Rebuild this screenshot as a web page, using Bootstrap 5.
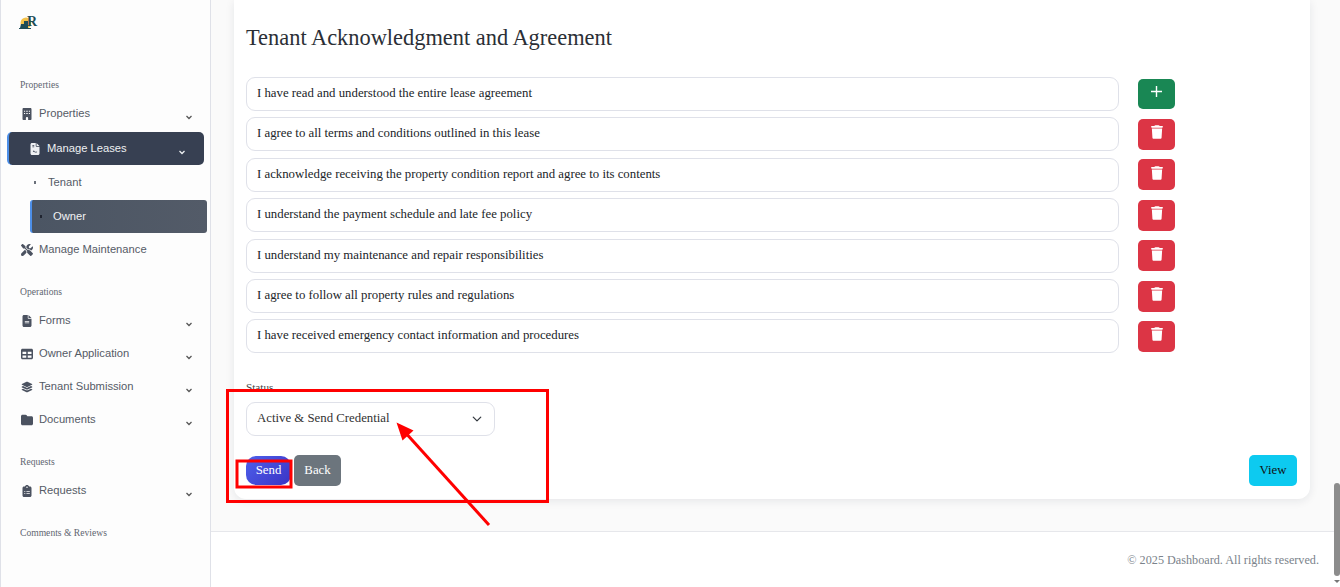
<!doctype html>
<html lang="en">
<head>
<meta charset="utf-8">
<title>Tenant Acknowledgment and Agreement</title>
<link href="https://cdn.jsdelivr.net/npm/bootstrap@5.3.0/dist/css/bootstrap.min.css" rel="stylesheet">
<style>
html,body{height:587px;overflow:hidden}
body{font-family:"Liberation Serif",serif;background:#fff;color:#212529}
.page-shell{height:587px;position:relative}
.side-rail{width:211px;flex:none;height:587px;background:#fdfdfd;border-left:1px solid #dfe1e8;border-right:1px solid #dfe1e8;font-family:"Liberation Sans",sans-serif}
.logo-box{height:78px;padding:15px 0 0 18px}
.logo-r{font:700 14px/1 "Liberation Serif",serif;color:#1d4d57;margin-left:-4px}
.sec-label{font:9.6px/14px "Liberation Serif",serif;color:#5f6671;padding-left:19px;height:14px}
.sec-gap{margin-top:19px}
.first-list{margin-top:5px}
.menu-line{height:33px;font-size:11.2px;color:#555b66;padding-left:20px;position:relative}
.menu-line svg.ico{width:12px;height:12px;fill:#4b5260;margin-right:6px;flex:none}
.menu-line .chev{position:absolute;left:184px;top:16px;width:8px;height:8px}
.menu-open{width:197px;margin:2px 0 1px 6px;padding-left:20px;background:#374052;border-left:2px solid #4d8fe8;border-radius:5px;color:#eef0f3}
.menu-open svg.ico{fill:#eef0f3;margin-right:6px}
.menu-open .chev{left:169px}
.sub-line{padding-left:33px}
.sub-dot{width:2px;height:3px;background:#6a707a;margin-right:12px;flex:none}
.sub-on{width:177px;margin:1px 0 0 29px;padding-left:8px;background:linear-gradient(90deg,#4b5563,#535b68);border-left:2px solid #4d8fe8;border-radius:3px;color:#f1f2f4}
.sub-on .sub-dot{background:#1f2430;margin-right:11px}
.main-pane{background:#fafafa;height:587px;min-width:0}
.form-sheet{margin:0 30px 0 23px;height:499px;background:#fff;border-radius:0 0 12px 12px;box-shadow:0 2px 10px rgba(20,30,60,.09);padding:0 13px 0 12px}
.sheet-title{font:22.4px/28px "Liberation Serif",serif;padding-top:24px;margin:0 0 25px;color:#2b2f36}
.ack-row{height:34px;margin-bottom:6.4px}
.ack-input{width:873px;height:34px;flex:none;border:1px solid #dfe1e9;border-radius:9px;font:12.8px/1 "Liberation Serif",serif;padding:0 10px 1px;color:#212529;box-shadow:none}
.sq-btn{width:37px;height:31px;margin-left:19px;padding:0;border:0;border-radius:5px;display:flex;align-items:center;justify-content:center;margin-top:1.6px}
.sq-btn svg{fill:#fff;width:12px;height:14px;margin-top:-4px}
.sq-btn.is-add{height:30px}
.sq-btn.is-add svg{width:11px;height:11px}
.status-cap{font-size:11.2px;line-height:12px;margin:28px 0 9px;color:#444}
.status-pick{width:249px;height:34px;border:1px solid #dfe1e9;border-radius:9px;font:12.8px/1 "Liberation Serif",serif;padding:0 10px 2px;color:#333;background-size:12px 10px;background-position:right 11px center}
.act-line{margin-top:19px}
.act-btn{font:12.8px/1 "Liberation Serif",serif;height:31px;padding:0 11px;border:0;border-radius:5px}
.btn-send{background:linear-gradient(135deg,#4d60ec,#3a33c4);color:#fff;width:45px;height:29px;margin-top:1px;padding:0;border-radius:10px;margin-right:3px}
.btn-backish{background:#6c757d;color:#fff;width:47px;padding-left:0;padding-right:0}
.btn-viewish{background:#0dcaf0;color:#111;width:48px;padding-left:0;padding-right:0}
.foot-line{margin-top:32px;height:56px;background:#fff;border-top:1px solid #e6e7eb;padding:20px 21px 0 0;font-size:12.2px;line-height:16px;color:#7b838b}
.mark-layer{position:absolute;left:0;top:0;width:1340px;height:587px;pointer-events:none}
.fake-thumb{position:absolute;left:1334px;top:483px;width:6px;height:93px;background:#8c8c8c;border-radius:3px}
.fake-arrow{position:absolute;left:1334px;top:580px;border:3px solid transparent;border-top:3px solid #777;border-bottom:0}
</style>
</head>
<body>
<div class="page-shell d-flex">
  <aside class="side-rail">
    <div class="logo-box d-flex align-items-start">
      <svg width="12" height="15" viewBox="0 0 12 15"><circle cx="7" cy="8" r="5.500" fill="#f4c34a"/><path d="M1 13l1-4h3V6h4v7zM0 13h12v1H0z" fill="#1d4d57"/></svg>
      <span class="logo-r">R</span>
    </div>
    <div class="sec-label">Properties</div>
    <div class="first-list">
      <div class="menu-line d-flex align-items-center"><svg class="ico" viewBox="0 0 384 512"><path d="M48 0C21.500 0 0 21.500 0 48V464c0 26.500 21.500 48 48 48h96V432c0-26.500 21.500-48 48-48s48 21.500 48 48v80h96c26.500 0 48-21.500 48-48V48c0-26.500-21.500-48-48-48H48zM64 240V208h48v48H64zm96-32h64v48h-64zm112 0h48v48h-48zM64 112h48v48H64zm96 0h64v48h-64zm112 0h48v48h-48z"/></svg>Properties<svg class="chev" viewBox="0 0 16 16"><path d="M3 6l5 5 5-5" fill="none" stroke="#555" stroke-width="2.500"/></svg></div>
      <div class="menu-line menu-open d-flex align-items-center"><svg class="ico" viewBox="0 0 384 512"><path d="M64 0C28.700 0 0 28.700 0 64V448c0 35.300 28.700 64 64 64H320c35.300 0 64-28.700 64-64V160H256c-17.700 0-32-14.300-32-32V0H64zM256 0V128H384L256 0zM80 80h80v32H80zm0 64h80v32H80zm20 216c30-50 50-50 70-10 20 30 40 30 110 10v30c-70 20-100 20-130-15-10-10-15 0-25 10z"/></svg>Manage Leases<svg class="chev" viewBox="0 0 16 16"><path d="M3 6l5 5 5-5" fill="none" stroke="#eef0f3" stroke-width="2.500"/></svg></div>
      <div class="menu-line sub-line d-flex align-items-center"><span class="sub-dot"></span>Tenant</div>
      <div class="menu-line sub-on d-flex align-items-center"><span class="sub-dot"></span>Owner</div>
      <div class="menu-line d-flex align-items-center"><svg class="ico" viewBox="0 0 512 512"><path d="M78.600 5C69.100-2.400 55.600-1.500 47 7L7 47c-8.500 8.500-9.400 22-2.100 31.600l80 104c4.500 5.900 11.600 9.400 19 9.400h54.100l109 109c-14.700 29-10 65.400 14.300 89.600l112 112c12.500 12.500 32.800 12.500 45.300 0l64-64c12.500-12.500 12.500-32.800 0-45.300l-112-112c-24.200-24.200-60.600-29-89.600-14.300l-109-109V104c0-7.500-3.500-14.500-9.400-19L78.600 5zM19.900 396.100C7.200 408.800 0 426.100 0 444.100C0 481.600 30.400 512 67.900 512c18 0 35.300-7.200 48-19.900L233.700 374.300c-7.800-20.900-9-43.600-3.600-65.100l-61.700-61.700L19.900 396.100zM512 144c0-10.500-1.100-20.700-3.200-30.500c-2.400-11.200-16.100-14.100-24.200-6l-63.900 63.900c-3 3-7.100 4.700-11.300 4.700H352c-8.800 0-16-7.200-16-16V102.600c0-4.200 1.700-8.300 4.700-11.300l63.900-63.900c8.100-8.100 5.200-21.800-6-24.200C388.700 1.100 378.500 0 368 0C288.500 0 224 64.500 224 144l0 .8 85.300 85.300c36-9.100 75.800 .5 104 28.700L429 274.500c49-23 83-72.800 83-130.500z"/></svg>Manage Maintenance</div>
    </div>
    <div class="sec-label sec-gap">Operations</div>
    <div class="first-list">
      <div class="menu-line d-flex align-items-center"><svg class="ico" viewBox="0 0 384 512"><path d="M64 0C28.700 0 0 28.700 0 64V448c0 35.300 28.700 64 64 64H320c35.300 0 64-28.700 64-64V160H256c-17.700 0-32-14.300-32-32V0H64zM256 0V128H384L256 0zM112 256H272c8.800 0 16 7.200 16 16s-7.200 16-16 16H112c-8.800 0-16-7.200-16-16s7.200-16 16-16zm0 64H272c8.800 0 16 7.200 16 16s-7.200 16-16 16H112c-8.800 0-16-7.200-16-16s7.200-16 16-16z"/></svg>Forms<svg class="chev" viewBox="0 0 16 16"><path d="M3 6l5 5 5-5" fill="none" stroke="#555" stroke-width="2.500"/></svg></div>
      <div class="menu-line d-flex align-items-center"><svg class="ico" viewBox="0 0 512 512"><path d="M64 32C28.700 32 0 60.700 0 96V416c0 35.300 28.700 64 64 64H448c35.300 0 64-28.700 64-64V96c0-35.300-28.700-64-64-64H64zM64 160H224v96H64zm0 160H224v96H64zM288 160H448v96H288zm0 160H448v96H288z"/></svg>Owner Application<svg class="chev" viewBox="0 0 16 16"><path d="M3 6l5 5 5-5" fill="none" stroke="#555" stroke-width="2.500"/></svg></div>
      <div class="menu-line d-flex align-items-center"><svg class="ico" viewBox="0 0 576 512"><path d="M264.500 5.200c14.900-6.900 32.100-6.900 47 0l218.600 101c8.500 3.900 13.900 12.400 13.900 21.800s-5.400 17.900-13.900 21.800l-218.600 101c-14.900 6.900-32.100 6.900-47 0L45.900 149.800C37.400 145.800 32 137.300 32 128s5.400-17.900 13.900-21.800L264.500 5.200zM476.900 209.600l53.200 24.600c8.500 3.900 13.900 12.400 13.900 21.800s-5.400 17.900-13.900 21.800l-218.600 101c-14.900 6.900-32.100 6.900-47 0L45.900 277.800C37.400 273.800 32 265.300 32 256s5.400-17.900 13.900-21.800l53.200-24.600 152 70.200c23.400 10.800 50.400 10.800 73.800 0l152-70.200zm-152 198.200l152-70.200 53.200 24.600c8.500 3.900 13.900 12.400 13.900 21.800s-5.400 17.900-13.900 21.800l-218.600 101c-14.900 6.900-32.100 6.900-47 0L45.900 405.800C37.400 401.800 32 393.300 32 384s5.400-17.900 13.900-21.800l53.200-24.600 152 70.200c23.400 10.800 50.400 10.800 73.800 0z"/></svg>Tenant Submission<svg class="chev" viewBox="0 0 16 16"><path d="M3 6l5 5 5-5" fill="none" stroke="#555" stroke-width="2.500"/></svg></div>
      <div class="menu-line d-flex align-items-center"><svg class="ico" viewBox="0 0 512 512"><path d="M64 480H448c35.300 0 64-28.700 64-64V160c0-35.300-28.700-64-64-64H288c-10.100 0-19.600-4.700-25.600-12.800L243.200 57.600C231.100 41.500 212.100 32 192 32H64C28.700 32 0 60.700 0 96V416c0 35.300 28.700 64 64 64z"/></svg>Documents<svg class="chev" viewBox="0 0 16 16"><path d="M3 6l5 5 5-5" fill="none" stroke="#555" stroke-width="2.500"/></svg></div>
    </div>
    <div class="sec-label sec-gap">Requests</div>
    <div class="first-list">
      <div class="menu-line d-flex align-items-center"><svg class="ico" viewBox="0 0 384 512"><path d="M192 0c-41.800 0-77.400 26.700-90.500 64H64C28.700 64 0 92.700 0 128V448c0 35.300 28.700 64 64 64H320c35.300 0 64-28.700 64-64V128c0-35.300-28.700-64-64-64H282.500C269.400 26.700 233.800 0 192 0zm0 64a32 32 0 1 1 0 64 32 32 0 1 1 0-64zM72 256h48v32H72zm96 0h144v32H168zM72 336h48v32H72zm96 0h144v32H168z"/></svg>Requests<svg class="chev" viewBox="0 0 16 16"><path d="M3 6l5 5 5-5" fill="none" stroke="#555" stroke-width="2.500"/></svg></div>
    </div>
    <div class="sec-label sec-gap">Comments &amp; Reviews</div>
  </aside>
  <main class="main-pane flex-grow-1">
    <section class="form-sheet">
      <h4 class="sheet-title">Tenant Acknowledgment and Agreement</h4>
      <div class="ack-row d-flex"><input class="form-control ack-input" value="I have read and understood the entire lease agreement"><button class="btn btn-success sq-btn is-add" type="button" aria-label="Add"><svg viewBox="0 0 11 11"><path d="M4.800 0h1.400v4.800H11v1.400H6.200V11H4.800V6.200H0V4.800h4.800z"/></svg></button></div>
      <div class="ack-row d-flex"><input class="form-control ack-input" value="I agree to all terms and conditions outlined in this lease"><button class="btn btn-danger sq-btn" type="button" aria-label="Delete"><svg viewBox="0 0 448 512"><path d="M135.200 17.700L128 32H32C14.300 32 0 46.300 0 64S14.300 96 32 96H416c17.700 0 32-14.300 32-32s-14.300-32-32-32H320l-7.200-14.300C307.400 6.800 296.300 0 284.200 0H163.800c-12.100 0-23.200 6.800-28.600 17.700zM416 128H32L53.200 467c1.600 25.300 22.600 45 47.900 45H346.900c25.300 0 46.300-19.700 47.900-45L416 128z"/></svg></button></div>
      <div class="ack-row d-flex"><input class="form-control ack-input" value="I acknowledge receiving the property condition report and agree to its contents"><button class="btn btn-danger sq-btn" type="button" aria-label="Delete"><svg viewBox="0 0 448 512"><path d="M135.200 17.700L128 32H32C14.300 32 0 46.300 0 64S14.300 96 32 96H416c17.700 0 32-14.300 32-32s-14.300-32-32-32H320l-7.200-14.300C307.400 6.800 296.300 0 284.200 0H163.800c-12.100 0-23.200 6.800-28.600 17.700zM416 128H32L53.200 467c1.600 25.300 22.600 45 47.900 45H346.900c25.300 0 46.300-19.700 47.900-45L416 128z"/></svg></button></div>
      <div class="ack-row d-flex"><input class="form-control ack-input" value="I understand the payment schedule and late fee policy"><button class="btn btn-danger sq-btn" type="button" aria-label="Delete"><svg viewBox="0 0 448 512"><path d="M135.200 17.700L128 32H32C14.300 32 0 46.300 0 64S14.300 96 32 96H416c17.700 0 32-14.300 32-32s-14.300-32-32-32H320l-7.200-14.300C307.400 6.800 296.300 0 284.200 0H163.800c-12.100 0-23.200 6.800-28.600 17.700zM416 128H32L53.200 467c1.600 25.300 22.600 45 47.900 45H346.900c25.300 0 46.300-19.700 47.900-45L416 128z"/></svg></button></div>
      <div class="ack-row d-flex"><input class="form-control ack-input" value="I understand my maintenance and repair responsibilities"><button class="btn btn-danger sq-btn" type="button" aria-label="Delete"><svg viewBox="0 0 448 512"><path d="M135.200 17.700L128 32H32C14.300 32 0 46.300 0 64S14.300 96 32 96H416c17.700 0 32-14.300 32-32s-14.300-32-32-32H320l-7.200-14.300C307.400 6.800 296.300 0 284.200 0H163.800c-12.100 0-23.200 6.800-28.600 17.700zM416 128H32L53.200 467c1.600 25.300 22.600 45 47.900 45H346.900c25.300 0 46.300-19.700 47.900-45L416 128z"/></svg></button></div>
      <div class="ack-row d-flex"><input class="form-control ack-input" value="I agree to follow all property rules and regulations"><button class="btn btn-danger sq-btn" type="button" aria-label="Delete"><svg viewBox="0 0 448 512"><path d="M135.200 17.700L128 32H32C14.300 32 0 46.300 0 64S14.300 96 32 96H416c17.700 0 32-14.300 32-32s-14.300-32-32-32H320l-7.200-14.300C307.400 6.800 296.300 0 284.200 0H163.800c-12.100 0-23.200 6.800-28.600 17.700zM416 128H32L53.200 467c1.600 25.300 22.600 45 47.900 45H346.900c25.300 0 46.300-19.700 47.900-45L416 128z"/></svg></button></div>
      <div class="ack-row d-flex"><input class="form-control ack-input" value="I have received emergency contact information and procedures"><button class="btn btn-danger sq-btn" type="button" aria-label="Delete"><svg viewBox="0 0 448 512"><path d="M135.200 17.700L128 32H32C14.300 32 0 46.300 0 64S14.300 96 32 96H416c17.700 0 32-14.300 32-32s-14.300-32-32-32H320l-7.200-14.300C307.400 6.800 296.300 0 284.200 0H163.800c-12.100 0-23.200 6.800-28.600 17.700zM416 128H32L53.200 467c1.600 25.300 22.600 45 47.900 45H346.900c25.300 0 46.300-19.700 47.900-45L416 128z"/></svg></button></div>
      <div class="status-cap">Status</div>
      <select class="form-select status-pick"><option>Active &amp; Send Credential</option></select>
      <div class="act-line d-flex align-items-start">
        <button class="btn act-btn btn-send" type="button">Send</button>
        <button class="btn act-btn btn-backish" type="button">Back</button>
        <button class="btn act-btn btn-viewish ms-auto" type="button">View</button>
      </div>
    </section>
    <footer class="foot-line text-end">© 2025 Dashboard. All rights reserved.</footer>
  </main>
  <svg class="mark-layer" viewBox="0 0 1340 587" aria-hidden="true">
    <rect x="227.500" y="390.500" width="320" height="111" fill="none" stroke="#f00" stroke-width="3"/>
    <rect x="237" y="461" width="54" height="26" fill="none" stroke="#f00" stroke-width="3"/>
    <path d="M489 525L403 430" stroke="#f00" stroke-width="3" fill="none"/>
    <path d="M396.500 422.500l17 8-11 10z" fill="#f00"/>
  </svg>
  <div class="fake-thumb"></div>
  <div class="fake-arrow"></div>
</div>
<script src="https://cdn.jsdelivr.net/npm/bootstrap@5.3.0/dist/js/bootstrap.bundle.min.js"></script>
</body>
</html>
